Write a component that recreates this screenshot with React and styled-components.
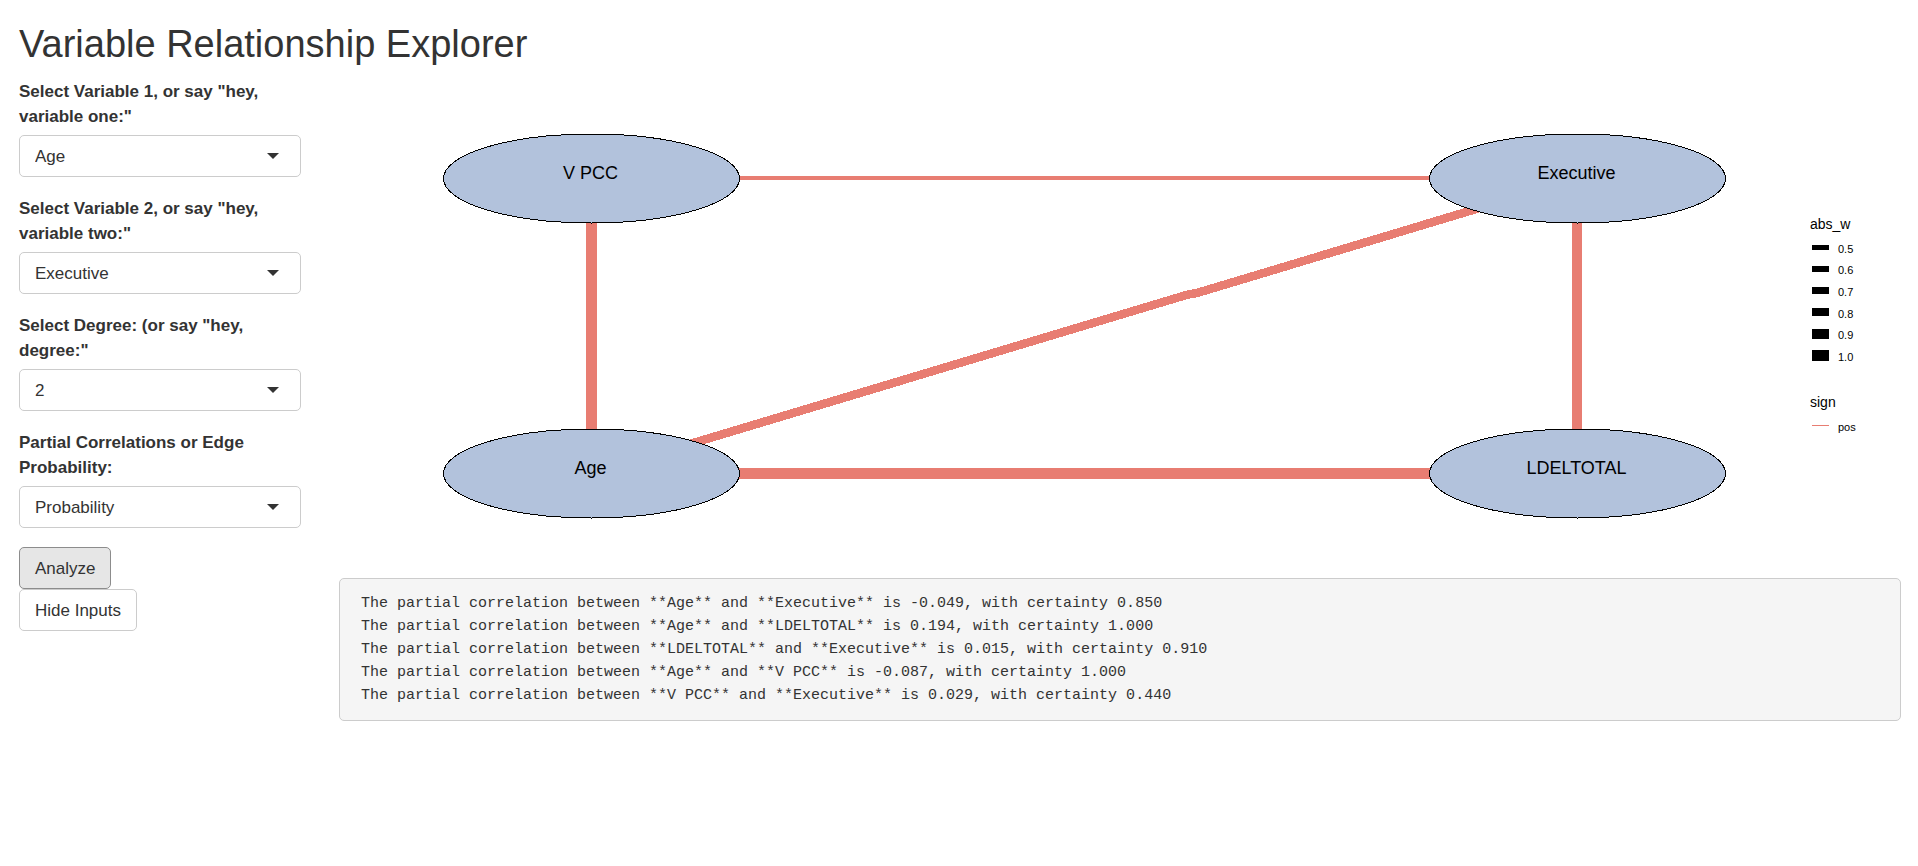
import React, { useState } from "react";
import styled, { createGlobalStyle } from "styled-components";

const GlobalStyle = createGlobalStyle`
  *, *::before, *::after { box-sizing: border-box; }
  body {
    margin: 0;
    background: #fff;
    color: #333;
    font-family: "Liberation Sans", Arial, sans-serif;
    font-size: 17px;
    line-height: 25px;
  }
`;

const Page = styled.div`
  padding: 24px 17px 24px 19px;
`;

const Title = styled.h1`
  margin: 0 0 14px;
  font-size: 38px;
  font-weight: 400;
  line-height: 41px;
`;

const Columns = styled.div`
  display: grid;
  grid-template-columns: minmax(0, 282fr) minmax(0, 1562fr);
  column-gap: 38px;
  align-items: start;
`;

const Sidebar = styled.form`
  display: flex;
  flex-direction: column;
  align-items: flex-start;
`;

const Field = styled.div`
  width: 100%;
  margin-bottom: 19px;
`;

const Label = styled.label`
  display: block;
  margin-bottom: 6px;
  font-weight: 700;
`;

const SelectBox = styled.div`
  position: relative;

  &::after {
    content: "";
    position: absolute;
    top: 18px;
    right: 22px;
    border: 6px solid transparent;
    border-top-color: #333;
    border-bottom: 0;
    pointer-events: none;
  }
`;

const Select = styled.select`
  appearance: none;
  display: block;
  width: 100%;
  height: 42px;
  padding: 0 40px 0 15px;
  border: 1px solid #ccc;
  border-radius: 5px;
  background: #fff;
  color: inherit;
  font: inherit;
`;

const Button = styled.button`
  height: 42px;
  padding: 0 15px;
  border: 1px solid ${(p) => (p.$active ? "#8c8c8c" : "#ccc")};
  border-radius: 5px;
  background: ${(p) => (p.$active ? "#e6e6e6" : "#fff")};
  color: inherit;
  font: inherit;
  cursor: pointer;
`;

const Plot = styled.svg`
  display: block;
  width: 100%;
  height: auto;
`;

const Edge = styled.path`
  fill: none;
  stroke: #e87d72;
  shape-rendering: crispEdges;
`;

const NodeShape = styled.ellipse`
  fill: #b2c2dc;
  stroke: #000;
  stroke-width: 1px;
  shape-rendering: crispEdges;
`;

const PlotText = styled.text`
  fill: #000;
  font-size: ${(p) => p.$size}px;
`;

const Output = styled.pre`
  margin: 0;
  padding: 13px 21px;
  border: 1px solid #ccc;
  border-radius: 5px;
  background: #f5f5f5;
  font-family: "Liberation Mono", monospace;
  font-size: 15px;
  line-height: 23px;
  white-space: pre-wrap;
`;

const variables = ["Age", "Executive", "LDELTOTAL", "V PCC"];

const fields = [
  { id: "var1", label: 'Select Variable 1, or say "hey, variable one:"', value: "Age", options: variables },
  { id: "var2", label: 'Select Variable 2, or say "hey, variable two:"', value: "Executive", options: variables },
  { id: "degree", label: 'Select Degree: (or say "hey, degree:"', value: "2", options: ["1", "2", "3"] },
  {
    id: "measure",
    label: "Partial Correlations or Edge Probability:",
    value: "Probability",
    options: ["Probability", "Partial Correlations"],
  },
];

const nodes = [
  { name: "V PCC", x: 252.5, y: 100.5 },
  { name: "Executive", x: 1238.5, y: 100.5 },
  { name: "Age", x: 252.5, y: 395.5 },
  { name: "LDELTOTAL", x: 1238.5, y: 395.5 },
];

const edges = [
  { d: "M252.5 100H1238.5", width: 4 },
  { d: "M252.5 100V395", width: 11 },
  { d: "M1238 100V395", width: 10 },
  { d: "M252.5 395.5H1238.5", width: 11 },
  { d: "M252.5 395.5L848 216.8L858 215L1238.5 100.5", width: 8.5 },
];

const weights = [
  { label: "0.5", y: 167, height: 5, base: 175 },
  { label: "0.6", y: 188, height: 6, base: 196 },
  { label: "0.7", y: 209, height: 7, base: 218 },
  { label: "0.8", y: 230, height: 8, base: 240 },
  { label: "0.9", y: 251, height: 10, base: 261 },
  { label: "1.0", y: 272, height: 11, base: 283 },
];

const results = [
  ["Age", "Executive", "-0.049", "0.850"],
  ["Age", "LDELTOTAL", "0.194", "1.000"],
  ["LDELTOTAL", "Executive", "0.015", "0.910"],
  ["Age", "V PCC", "-0.087", "1.000"],
  ["V PCC", "Executive", "0.029", "0.440"],
];

function SelectField({ id, label, value, options }) {
  return (
    <Field>
      <Label htmlFor={id}>{label}</Label>
      <SelectBox>
        <Select id={id} defaultValue={value}>
          {options.map((o) => (
            <option key={o}>{o}</option>
          ))}
        </Select>
      </SelectBox>
    </Field>
  );
}

function NetworkPlot() {
  return (
    <Plot viewBox="0 1 1562 499" role="img" aria-label="Variable network">
      {edges.map((e) => (
        <Edge key={e.d} d={e.d} strokeWidth={e.width} />
      ))}
      {nodes.map((n) => (
        <g key={n.name}>
          <NodeShape cx={n.x} cy={n.y} rx="148" ry="44.5" />
          <PlotText $size={18} x={n.x - 1} y={n.y + 0.5} textAnchor="middle">
            {n.name}
          </PlotText>
        </g>
      ))}
      <PlotText $size={14} x="1471" y="151">abs_w</PlotText>
      {weights.map((w) => (
        <g key={w.label}>
          <rect x="1473" y={w.y} width="17" height={w.height} />
          <PlotText $size={11} x="1499" y={w.base}>{w.label}</PlotText>
        </g>
      ))}
      <PlotText $size={14} x="1471" y="329">sign</PlotText>
      <rect x="1473" y="347" width="17" height="1" fill="#e87d72" />
      <PlotText $size={11} x="1499" y="353">pos</PlotText>
    </Plot>
  );
}

export default function App() {
  const [hidden, setHidden] = useState(false);
  return (
    <Page>
      <GlobalStyle />
      <Title>Variable Relationship Explorer</Title>
      <Columns>
        <Sidebar onSubmit={(e) => e.preventDefault()}>
          {!hidden && fields.map((f) => <SelectField key={f.id} {...f} />)}
          <Button type="submit" $active>Analyze</Button>
          <Button type="button" onClick={() => setHidden(!hidden)}>
            {hidden ? "Show Inputs" : "Hide Inputs"}
          </Button>
        </Sidebar>
        <main>
          <NetworkPlot />
          <Output>
            {results
              .map(([a, b, r, c]) => `The partial correlation between **${a}** and **${b}** is ${r}, with certainty ${c}`)
              .join("\n")}
          </Output>
        </main>
      </Columns>
    </Page>
  );
}
